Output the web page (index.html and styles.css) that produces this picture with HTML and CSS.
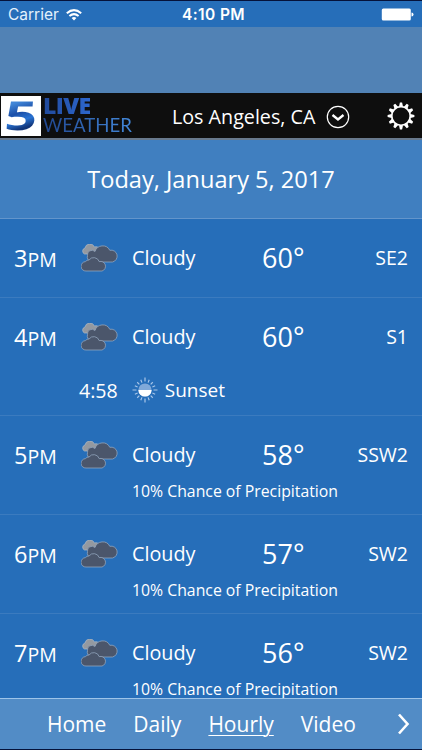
FILE: index.html
```
<!DOCTYPE html>
<html lang="en">
<head>
<meta charset="utf-8">
<title>Live Weather</title>
<link rel="stylesheet" href="styles.css">
</head>
<body>
<svg class="defs" width="0" height="0" aria-hidden="true">
  <symbol id="cloudy" viewBox="0 0 38 28">
    <path d="M3.500 10a3.200 3.200 0 0 1 .5-6A5 5 0 0 1 13.500 3a3.500 3.500 0 0 1 2.500 7z" fill="#9499a0" stroke="#b0bac6" stroke-width=".7"/>
    <path d="M11 18a5 5 0 0 1-4.500-6.500A4.500 4.500 0 0 1 14 7.500a8 8 0 0 1 14.800-1.200A6 6 0 1 1 31.500 18z" fill="#4b566b" stroke="#92a4bd" stroke-width=".8"/>
    <path d="M5 27a4.700 4.700 0 0 1-.5-9.400A4 4 0 0 1 8 16a5.800 5.800 0 0 1 10.200 1.600A4.800 4.800 0 1 1 21 27z" fill="#4b566b" stroke="#92a4bd" stroke-width=".8"/>
  </symbol>
</svg>
<div class="screen">
  <header class="status">
    <div class="carrier"><span>Carrier</span>
      <svg width="16" height="12" viewBox="0 0 16 12" fill="none" stroke="#fff" stroke-width="2"><path d="M.8 4.300Q8-2 15.200 4.300M3.400 7.100Q8 3.200 12.600 7.100"/><path d="M5.600 9Q8 7 10.400 9L8 11.500z" fill="#fff" stroke="none"/></svg>
    </div>
    <time>4:10 PM</time>
    <svg class="battery" width="33" height="13" viewBox="0 0 33 13" fill="#fff"><rect x=".8" y=".5" width="29" height="12" rx="1.500"/><path d="M30.500 4.500q2 0 2 2t-2 2z"/></svg>
  </header>
  <div class="banner"></div>
  <div class="topbar">
    <div class="logo"><div class="tile"><span class="five">5</span></div><div class="brand"><b>LIVE</b><span>WEATHER</span></div></div>
    <div class="place"><span>Los Angeles, CA</span>
      <svg width="24" height="24" viewBox="0 0 24 24" fill="none" stroke="#fff"><circle cx="12" cy="12" r="10.700" stroke-width="1.200"/><path d="M6.500 10l5.500 4.500 5.500-4.500" stroke-width="2.300"/></svg>
    </div>
    <svg class="gear" width="28" height="28" viewBox="-14 -14 28 28"><circle r="9.300" fill="none" stroke="#fff" stroke-width="1.800"/><g fill="#fff"><g id="teeth"><path id="tooth" d="M-2-9.500l.9-3.900h2.200l.9 3.900zM-2 9.500l.9 3.900h2.200l.9-3.900z"/><use href="#tooth" transform="rotate(30)"/><use href="#tooth" transform="rotate(60)"/></g><use href="#teeth" transform="rotate(90)"/></g></svg>
  </div>
  <h1><span>Today, January 5, 2017</span></h1>
  <main>
    <section class="hour first">
      <div class="main"><span class="time"><b>3</b>PM</span><svg class="cloud"><use href="#cloudy"/></svg><span class="cond">Cloudy</span><span class="temp">60°</span><span class="wind">SE2</span></div>
    </section>
    <section class="hour sun">
      <div class="main"><span class="time"><b>4</b>PM</span><svg class="cloud"><use href="#cloudy"/></svg><span class="cond">Cloudy</span><span class="temp">60°</span><span class="wind">S1</span></div>
      <div class="sunset"><span class="at">4:58</span>
        <svg width="26" height="26" viewBox="-13 -13 26 26"><g stroke="#a9c6e8" stroke-width="1.200"><g id="rays"><path id="ray" d="M0-8.500V-12.500M0 8.500V12.500"/><use href="#ray" transform="rotate(90)"/><g id="mid"><path d="M0-8V-11M0 8V11" transform="rotate(22.500)"/><path d="M0-8V-11M0 8V11" transform="rotate(45)"/><path d="M0-8V-11M0 8V11" transform="rotate(67.500)"/></g><use href="#mid" transform="rotate(90)"/></g></g><circle r="6.600" fill="#80a9d9"/><path d="M-6.600 0a6.600 6.600 0 0 0 13.200 0z" fill="#fff"/></svg>
        <span>Sunset</span></div>
    </section>
    <section class="hour rain">
      <div class="main"><span class="time"><b>5</b>PM</span><svg class="cloud"><use href="#cloudy"/></svg><span class="cond">Cloudy</span><span class="temp">58°</span><span class="wind">SSW2</span></div>
      <p>10% Chance of Precipitation</p>
    </section>
    <section class="hour rain">
      <div class="main"><span class="time"><b>6</b>PM</span><svg class="cloud"><use href="#cloudy"/></svg><span class="cond">Cloudy</span><span class="temp">57°</span><span class="wind">SW2</span></div>
      <p>10% Chance of Precipitation</p>
    </section>
    <section class="hour rain">
      <div class="main"><span class="time"><b>7</b>PM</span><svg class="cloud"><use href="#cloudy"/></svg><span class="cond">Cloudy</span><span class="temp">56°</span><span class="wind">SW2</span></div>
      <p>10% Chance of Precipitation</p>
    </section>
  </main>
  <nav><a>Home</a><a>Daily</a><a class="active">Hourly</a><a>Video</a>
    <svg width="14" height="22" viewBox="0 0 14 22" fill="none" stroke="#fff" stroke-width="2.600"><path d="M2 1.500l8.500 9.500L2 20.500"/></svg>
  </nav>
</div>
</body>
</html>
```
FILE: styles.css
```
* { box-sizing: border-box; }
body { margin: 0; }
.defs { display: block; }
.screen {
  width: 422px;
  height: 750px;
  display: flex;
  flex-direction: column;
  overflow: hidden;
  background: #266eb9;
  border-top: 1px solid #05123a;
  border-bottom: 1px solid #05123a;
  color: #fff;
  font-family: "Open Sans", sans-serif;
  white-space: nowrap;
}
.status {
  flex: none;
  height: 26px;
  display: grid;
  grid-template-columns: 1fr auto 1fr;
  align-items: center;
  padding: 1px 8px 0;
  font: 16px/20px Inter, sans-serif;
}
.carrier { display: flex; align-items: center; gap: 7px; color: #e3f1fc; font-size: 15.5px; }
.carrier span { padding-top: 1px; }
.status time { font-weight: 600; font-size: 15.5px; letter-spacing: .4px; padding: 1px 0 0 5px; }
.battery { justify-self: end; }
.banner { flex: none; height: 66px; background: #5182b5; }
.topbar {
  flex: none;
  height: 47px;
  display: flex;
  align-items: center;
  background: #0e0e0e;
  border-bottom: 2px solid #68798d;
}
.logo { width: 172px; display: flex; align-items: center; gap: 2px; padding-left: 1px; }
.tile {
  width: 40px;
  height: 40px;
  background: #fff;
  text-align: center;
}
.five {
  display: block;
  font: 700 40px/38px "Open Sans", sans-serif;
  transform: scaleX(1.42) skewX(-3deg);
  background: linear-gradient(155deg, #4186d8 25%, #1b4fa8 45%, #2a74d4 60%, #123579 75%);
  background-clip: text;
  color: transparent;
}
.brand { display: flex; flex-direction: column; gap: 1px; padding-bottom: 1px; }
.brand b, .brand span {
  align-self: flex-start;
  background: linear-gradient(90deg, #214a9c, #2d67ce);
  background-clip: text;
  color: transparent;
}
.brand b { font: 800 23px/19px "Open Sans", sans-serif; letter-spacing: -.6px; }
.brand span { font: 18.6px/18px Lato, sans-serif; background-image: linear-gradient(90deg, #20468f, #4388da); }
.place { display: flex; align-items: center; gap: 11px; padding-top: 2px; font-size: 19.7px; }
.gear { margin-left: auto; margin-right: 7px; }
h1 {
  flex: none;
  height: 79px;
  margin: 0;
  background: #407fc0;
  border-bottom: 1px solid #6395cb;
  font-size: 23.6px;
  font-weight: 400;
  line-height: 78px;
  text-align: center;
}
main { flex: 1; min-height: 0; overflow: hidden; }
.hour { border-bottom: 1px solid #3b7bbf; }
.first { height: 79px; }
.sun { height: 118px; }
.rain { height: 99px; }
.main {
  height: 76px;
  display: grid;
  grid-template-columns: 67px 51px 130px 1fr auto;
  align-items: center;
  padding: 0 14px;
  font-size: 19.8px;
}
.time { font-size: 19.5px; padding-top: 1px; }
.time b { font-size: 23.5px; font-weight: 400; }
.cloud { width: 38px; height: 28px; margin-top: 2px; }
.temp { font-size: 27px; }
.wind { font-size: 19.5px; }
.sunset { display: flex; align-items: center; height: 32px; padding-left: 79px; font-size: 19px; }
.at { font-size: 19.6px; }
.sunset svg { margin: 0 7px 0 14px; }
.hour p { margin: -11px 0 0 132px; font-size: 15.8px; line-height: 21px; }
nav {
  flex: none;
  height: 51px;
  display: flex;
  align-items: center;
  gap: 27px;
  padding: 0 11px 0 47px;
  background: #528cc6;
  border-top: 1px solid #9dc4e9;
  font-size: 21px;
}
nav a.active { text-decoration: underline; text-decoration-thickness: 1px; text-underline-offset: 3px; }
nav svg { margin-left: auto; }
```
